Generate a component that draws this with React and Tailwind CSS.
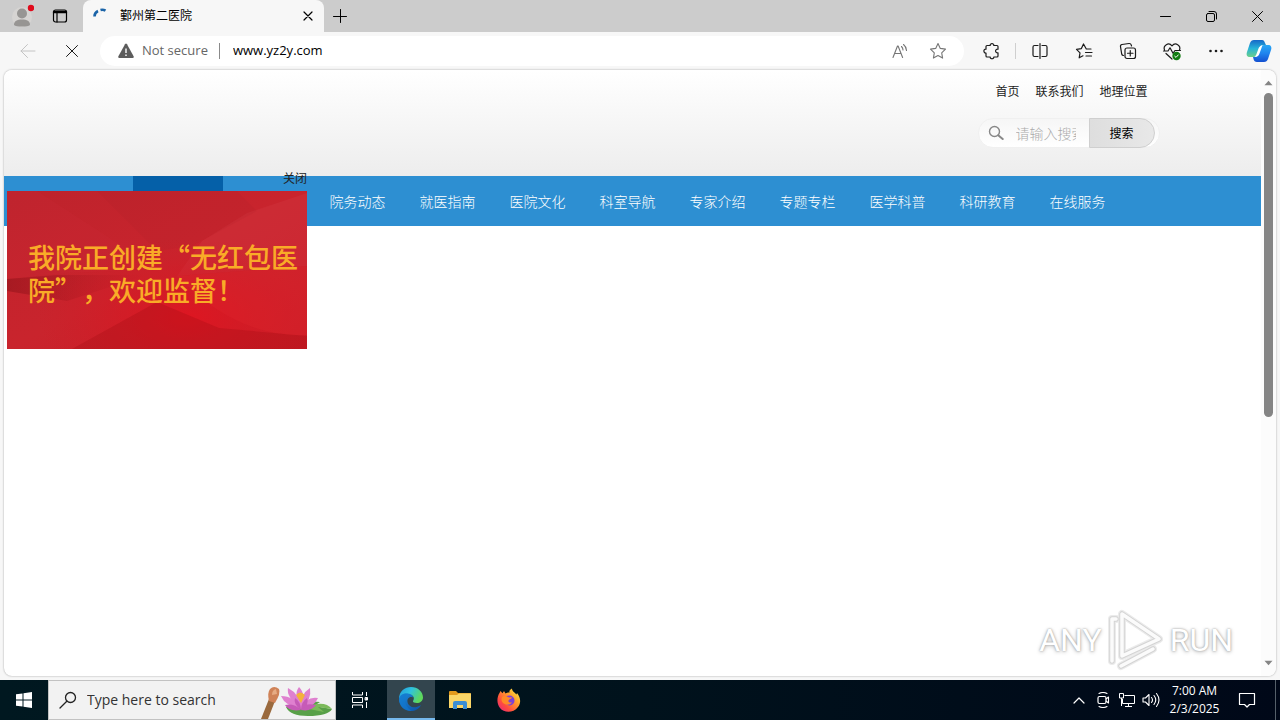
// src/App.jsx
import React, { useState } from 'react';

const navItems = [
  '院务动态',
  '就医指南',
  '医院文化',
  '科室导航',
  '专家介绍',
  '专题专栏',
  '医学科普',
  '科研教育',
  '在线服务',
];

const Icon = ({ children, size = 20, className = '' }) => (
  <svg
    width={size}
    height={size}
    viewBox={`0 0 ${size} ${size}`}
    fill="none"
    stroke="currentColor"
    strokeWidth="1"
    strokeLinecap="round"
    strokeLinejoin="round"
    className={className}
    aria-hidden="true"
  >
    {children}
  </svg>
);

const ToolButton = ({ label, className = 'w-11', children }) => (
  <button
    type="button"
    aria-label={label}
    className={`${className} h-full shrink-0 flex items-center justify-center`}
  >
    {children}
  </button>
);

const TabStrip = () => (
  <div className="flex h-8 bg-[#cccccc] text-black">
    <div className="flex w-[83px] shrink-0 pl-1 pr-1">
      <ToolButton label="Profile" className="w-9">
        <svg width="24" height="24" viewBox="0 0 24 24" aria-hidden="true">
          <circle cx="12" cy="13" r="10" fill="#d6d4d2" />
          <circle cx="12" cy="9.500" r="5" fill="#979593" />
          <path d="M4 21c0-4 3-5.500 8-5.500s8 1.500 8 5.500c-2 2-14 2-16 0z" fill="#979593" />
          <circle cx="21" cy="4" r="3.200" fill="#e00b1c" />
        </svg>
      </ToolButton>
      <ToolButton label="Tab actions" className="w-10">
        <Icon size={16}>
          <rect x="1.500" y="2" width="13" height="12" rx="2" strokeWidth="1.200" />
          <path d="M2 4h12" strokeWidth="2.400" />
          <path d="M5 5v9" strokeWidth="1.200" />
        </Icon>
      </ToolButton>
    </div>
    <div className="flex w-[241px] shrink-0 items-center rounded-t-lg bg-[#f7f7f7] pl-2 pr-1">
      <Icon size={18} className="shrink-0 text-[#1b64a8]">
        <path d="M3.500 9.500A6 6 0 0 1 7 4M9.500 3a6 6 0 0 1 5 .7" strokeWidth="2.600" strokeLinecap="butt" />
      </Icon>
      <span className="ml-[11px] flex-1 text-xs">鄞州第二医院</span>
      <ToolButton label="Close tab" className="w-6">
        <Icon size={10}>
          <path d="M1 1l8 8M9 1L1 9" strokeWidth="1.200" />
        </Icon>
      </ToolButton>
    </div>
    <ToolButton label="New tab" className="w-8">
      <Icon size={14}>
        <path d="M7.500 .5v13M.5 7.500h13" strokeWidth="1" />
      </Icon>
    </ToolButton>
    <div className="flex-1" />
    <ToolButton label="Minimize" className="w-[46px]">
      <Icon size={11}>
        <path d="M.5 5.500h10" />
      </Icon>
    </ToolButton>
    <ToolButton label="Restore" className="w-[46px]">
      <Icon size={11}>
        <rect x=".5" y="2.500" width="8" height="8" rx="1.500" />
        <path d="M3 .5h5a2.500 2.500 0 0 1 2.500 2.500v5" />
      </Icon>
    </ToolButton>
    <ToolButton label="Close" className="w-[46px]">
      <Icon size={11}>
        <path d="M.5.5l10 10M10.500.5l-10 10" />
      </Icon>
    </ToolButton>
  </div>
);

const CopilotLogo = () => (
  <svg width="26" height="24" viewBox="0 0 26 24" aria-hidden="true">
    <defs>
      <linearGradient id="cpLeft" x1="0" y1="0" x2="0" y2="1">
        <stop offset="0" stopColor="#1668c8" />
        <stop offset=".5" stopColor="#27b4d8" />
        <stop offset="1" stopColor="#6bd08a" />
      </linearGradient>
      <linearGradient id="cpRight" x1="0" y1="0" x2="0" y2="1">
        <stop offset="0" stopColor="#2aa8f5" />
        <stop offset=".5" stopColor="#1f83ee" />
        <stop offset="1" stopColor="#1450d0" />
      </linearGradient>
    </defs>
    <path d="M8 1h8c2 0 2.500 1.500 3 3l1 2h-3c-2 0-3 1-3.500 3l-2 6c-.6 2-1.500 3-3.500 3H4c-3 0-4-2-3-5l3-9c.8-2 2-3 4-3z" fill="url(#cpLeft)" />
    <path d="M18 23h-7c-2 0-3-1-3.500-3L7 18h2c2 0 3-1 3.500-3l2-6c.6-2 1.500-3 3.500-3h4c3 0 4 2 3 5l-3 9c-.8 2-2 3-4 3z" fill="url(#cpRight)" />
    <path d="M16.500 6.500c-1.500.3-3 1-3.800 2.500l-2.200 6c-.3 1-.9 2-2 2.700 2.500.3 4-.4 4.800-2.700l2.200-6c.3-1 .5-1.800 1-2.500z" fill="#fff" />
  </svg>
);

const Toolbar = () => (
  <div className="flex h-[38px] items-center bg-[#f7f7f7] pl-[6px] text-[#1b1b1b]">
    <ToolButton label="Back">
      <Icon size={16} className="text-[#c4c4c4]">
        <path d="M15 8H1M7.500 1.500L1 8l6.500 6.500" />
      </Icon>
    </ToolButton>
    <ToolButton label="Stop">
      <Icon size={12}>
        <path d="M.5.5l11 11M11.500.5l-11 11" />
      </Icon>
    </ToolButton>
    <div className="mx-[6px] flex h-[30px] min-w-0 flex-1 items-center rounded-full bg-white pl-[18px] pr-2">
      <svg width="16" height="16" viewBox="0 0 16 16" className="shrink-0" aria-hidden="true">
        <path d="M7 1.300a1.200 1.200 0 0 1 2 0l6.600 12a1.200 1.200 0 0 1-1 1.700H1.400a1.200 1.200 0 0 1-1-1.700z" fill="#5c5c5c" />
        <path d="M8 5.500v4.500M8 11.500v1.600" stroke="#fff" strokeWidth="1.400" />
      </svg>
      <span className="ml-2 whitespace-nowrap text-[13px] text-[#666]">Not secure</span>
      <span className="ml-[11px] h-4 w-px bg-[#8a8a8a]" />
      <input
        type="text"
        aria-label="Address"
        defaultValue="www.yz2y.com"
        className="ml-[13px] min-w-0 flex-1 bg-transparent text-[13px] text-black outline-none"
      />
      <ToolButton label="Read aloud" className="w-10">
        <Icon size={16} className="text-[#767676]">
          <path d="M1 14.500L5.500 3h.6l4.500 11.500M2.500 10.500h6.700M9.500 3.500a5 5 0 0 1 1.500 3.500M11.500 1.500a8 8 0 0 1 3 6" strokeWidth="1.100" />
        </Icon>
      </ToolButton>
      <ToolButton label="Add to favorites" className="w-9">
        <Icon size={18} className="text-[#767676]">
          <path d="M9 1.500l2.300 4.900 5.200.7-3.800 3.700.9 5.300L9 13.600l-4.600 2.500.9-5.300L1.500 7.100l5.200-.7z" strokeWidth="1.100" />
        </Icon>
      </ToolButton>
    </div>
    <ToolButton label="Extensions">
      <Icon>
        <path d="M5 4.500h3.200C7.800 2 12.200 2 11.800 4.500H15q1 0 1 1v2.700c-3.200-.5-3.200 4.100 0 3.600V15q0 1-1 1h-3.200c.4 2.300-4 2.300-3.600 0H5q-1 0-1-1v-3c-2.800.4-2.800-4.200 0-3.800V5.500q0-1 1-1z" strokeWidth="1.200" />
      </Icon>
    </ToolButton>
    <span className="mr-[2px] ml-px h-4 w-px bg-[#cfcfcf]" />
    <ToolButton label="Split screen">
      <Icon size={18}>
        <path d="M7 3.500H3.500q-1.500 0-1.500 1.500v8q0 1.500 1.500 1.500H7M11 3.500h3.500q1.500 0 1.500 1.500v8q0 1.500-1.500 1.500H11M9 1.500v15" strokeWidth="1.200" />
      </Icon>
    </ToolButton>
    <ToolButton label="Favorites">
      <Icon size={18}>
        <path d="M16 7h-4.700L8.500 2 6.400 6.600 1.500 7.300 5 10.800l-.8 5L8 13.800M10.500 10.500H17M11 14h5.500" strokeWidth="1.200" />
      </Icon>
    </ToolButton>
    <ToolButton label="Collections">
      <Icon size={18}>
        <rect x="6" y="6" width="10.500" height="10.500" rx="2" strokeWidth="1.200" />
        <path d="M11.250 8.500v5.500M8.500 11.250H14M4.500 13.500c-1 0-1.600-.6-1.800-1.500L1.500 4.700C1.300 3.600 2 2.700 3 2.500l7-1c1-.1 2 .5 2.300 1.700l.2.8" strokeWidth="1.200" />
      </Icon>
    </ToolButton>
    <ToolButton label="Browser essentials">
      <Icon>
        <path d="M2.500 9C.8 4.500 6.500.8 10 4.800 13.500.8 19.200 4.500 17.500 9M1.500 10H6l2-3.200 3 5.500L13 9.500h5.500M4 12.500l6 5.500" strokeWidth="1.200" />
        <circle cx="14.500" cy="15" r="4.200" fill="#107c10" stroke="none" />
        <path d="M12.700 15.200l1.300 1.200 2.300-2.500" stroke="#fff" />
      </Icon>
    </ToolButton>
    <ToolButton label="Settings and more">
      <Icon size={16}>
        <g fill="currentColor" stroke="none">
          <circle cx="2.500" cy="8" r="1.300" />
          <circle cx="8" cy="8" r="1.300" />
          <circle cx="13.500" cy="8" r="1.300" />
        </g>
      </Icon>
    </ToolButton>
    <ToolButton label="Copilot" className="w-[42px]">
      <CopilotLogo />
    </ToolButton>
  </div>
);

const SiteHeader = () => (
  <header className="h-[106px] bg-gradient-to-b from-white to-[#ededed]">
    <div className="mx-auto flex max-w-[1054px] flex-col items-end">
      <div className="mt-[11px] flex gap-4 pr-3 text-xs leading-5 text-[#222]">
        <a href="#home">首页</a>
        <a href="#contact">联系我们</a>
        <a href="#location">地理位置</a>
      </div>
      {/* Buscador del sitio */}
      <form
        onSubmit={(e) => e.preventDefault()}
        className="mt-[17px] flex h-[30px] w-[182px] items-center rounded-full border border-[#f0f0f0] bg-gradient-to-b from-[#f6f6f6] to-white pr-1"
      >
        <Icon size={16} className="ml-[9px] shrink-0 text-[#888]">
          <circle cx="6.500" cy="6.500" r="5" strokeWidth="1.400" />
          <path d="M10.500 10.500l4.200 3.500" strokeWidth="2" />
        </Icon>
        <input
          type="text"
          aria-label="搜索内容"
          placeholder="请输入搜索关键字"
          className="ml-3 mr-[13px] w-[60px] bg-transparent text-sm font-light outline-none placeholder:text-[#aaa]"
        />
        <button
          type="submit"
          className="h-[30px] flex-1 rounded-r-full border border-[#cfcfcf] bg-gradient-to-r from-[#dedede] to-[#e8e8e8] text-xs text-black"
        >
          搜索
        </button>
      </form>
    </div>
  </header>
);

const SiteNav = () => (
  <nav className="h-[50px] bg-[#2d8fd2]">
    <ul className="mx-auto flex h-full max-w-[1000px] text-sm font-light text-white">
      <li className="w-[90px] bg-[#0560a8]" />
      <li className="w-[90px]" />
      {navItems.map((item, index) => (
        <li key={item} className="w-[90px]">
          <a href={`#nav-${index}`} className="flex h-full items-center justify-center whitespace-nowrap">
            {item}
          </a>
        </li>
      ))}
    </ul>
  </nav>
);

// Aviso flotante sobre la página
const FloatingNotice = ({ onClose }) => (
  <div className="absolute left-[3px] top-[98px] w-[300px]">
    <div className="flex h-[23px] justify-end">
      <button type="button" onClick={onClose} className="h-5 text-xs text-[#222]">
        关闭
      </button>
    </div>
    <div className="relative h-[158px] overflow-hidden bg-[#c6222b]">
      <svg width="100%" height="100%" viewBox="0 0 300 158" preserveAspectRatio="none" className="absolute inset-0" aria-hidden="true">
        <defs>
          <linearGradient id="noticeBg" x1="0" y1="0" x2="1" y2="1">
            <stop offset="0" stopColor="#bd232c" />
            <stop offset=".5" stopColor="#c9242d" />
            <stop offset="1" stopColor="#cb1d26" />
          </linearGradient>
          <radialGradient id="noticeGlow" cx=".6" cy=".8" r=".5">
            <stop offset="0" stopColor="#e3131f" stopOpacity=".8" />
            <stop offset="1" stopColor="#d01a24" stopOpacity="0" />
          </radialGradient>
          <linearGradient id="noticeShade" x1="0" y1="0" x2="1" y2="0">
            <stop offset="0" stopColor="#8f1219" stopOpacity=".55" />
            <stop offset="1" stopColor="#a5141c" stopOpacity="0" />
          </linearGradient>
        </defs>
        <rect width="300" height="158" fill="url(#noticeBg)" />
        <path d="M0 88L60 82 150 78 92 40 30 0H0z" fill="#cf323b" opacity=".15" />
        <path d="M300 2L240 22 195 50 170 85 300 75z" fill="#d9404a" opacity=".25" />
        <path d="M185 55L250 20 230 0H90l60 60z" fill="#a81f27" opacity=".12" />
        <path d="M0 88l50-4 90 0L60 110 0 100z" fill="url(#noticeShade)" />
        <rect width="300" height="158" fill="url(#noticeGlow)" />
        <path d="M65 158l85-47 62 26 88 8v13z" fill="#a30d15" opacity=".3" />
        <path d="M170 85q60 62 130 59V75z" fill="#e32630" opacity=".25" />
      </svg>
      <p className="relative pl-[21px] pt-[49px] text-[27px] font-medium leading-[33px] text-[#f9ab27] [text-spacing-trim:space-all]">
        我院正创建“无红包医
        <br />
        院”，欢迎监督！
      </p>
    </div>
  </div>
);

const ScrollBar = () => (
  <div className="flex w-[15px] shrink-0 flex-col items-center bg-[#fcfcfc] py-[10px] text-[#858585]">
    <svg width="9" height="6" viewBox="0 0 10 6" aria-hidden="true">
      <path d="M5 .5L9.500 5.500H.5z" fill="currentColor" />
    </svg>
    <div className="mt-[7px] h-[324px] w-[9px] rounded-full bg-[#858585]" />
    <div className="flex-1" />
    <svg width="9" height="6" viewBox="0 0 10 6" aria-hidden="true">
      <path d="M5 5.500L9.500.5H.5z" fill="currentColor" />
    </svg>
  </div>
);

const Watermark = () => (
  <div className="absolute bottom-1 right-7 flex items-center gap-1 font-['Liberation_Sans_Narrow','Roboto',sans-serif] text-[32px] leading-none text-white [text-shadow:0_0_2px_#999,0_1px_4px_#bbb]">
    <span>ANY</span>
    <svg width="60" height="64" viewBox="0 0 60 64" fill="none" strokeLinejoin="round" strokeLinecap="round" aria-hidden="true">
      <g stroke="#ebebeb" strokeWidth="8">
        <path d="M16 6v42L53 31z" />
        <path d="M10 11H6v42M15 58l32-17" />
      </g>
      <g stroke="#d4d4d4" strokeWidth="5.500">
        <path d="M16 6v42L53 31z" />
        <path d="M10 11H6v42M15 58l32-17" />
      </g>
      <g stroke="#fbfbfb" strokeWidth="3.500">
        <path d="M16 6v42L53 31z" />
        <path d="M10 11H6v42M15 58l32-17" />
      </g>
    </svg>
    <span>RUN</span>
  </div>
);

const EdgeLogo = () => (
  <svg width="24" height="24" viewBox="0 0 24 24" aria-hidden="true">
    <defs>
      <linearGradient id="edgeTop" x1="0" y1="0" x2="1" y2=".4">
        <stop offset="0" stopColor="#2299dc" />
        <stop offset=".5" stopColor="#2fc2df" />
        <stop offset="1" stopColor="#5ed85c" />
      </linearGradient>
      <linearGradient id="edgeBody" x1="0" y1="0" x2="1" y2="1">
        <stop offset="0" stopColor="#1b8bdc" />
        <stop offset="1" stopColor="#0c4fa5" />
      </linearGradient>
    </defs>
    <path d="M0 12C0 4 6 0 12 0c7 0 12 5 12 10.500 0 3.500-3 5.500-6 5.500-2.500 0-4.500-1-4-2 2-3 .5-6-3.500-6C5 8 1 10 0 12z" fill="url(#edgeTop)" />
    <path d="M0 12c1-4.500 5-6 9-5.500 3 .3 5 2 5 4-4-1.500-6 1.500-5.500 4.500.6 4 5 6 9 5 2-.5 3.500-1.500 4.500-2C20 22 16 24 12 24 5 24 0 18.500 0 12z" fill="url(#edgeBody)" />
    <path d="M9 6.600C4.500 9 4.500 19 12.500 24 5 24 0 18.500 0 12c1-4.500 5-6 9-5.400z" fill="#1278cf" opacity=".6" />
  </svg>
);

const FolderLogo = () => (
  <svg width="22" height="20" viewBox="0 0 22 20" aria-hidden="true">
    <path d="M0 2q0-1 1-1h6l2 2h12q1 0 1 1v3H0z" fill="#e39a1c" />
    <path d="M0 5h8l2-1.500h12V18H0z" fill="#fbd667" />
    <path d="M4 19v-6q0-2 2-2h10q2 0 2 2v6h-4v-4H8v4z" fill="#3b8ed4" />
    <path d="M8 15h6v3H8z" fill="#fbd667" />
  </svg>
);

const FirefoxLogo = () => (
  <svg width="24" height="24" viewBox="0 0 24 24" aria-hidden="true">
    <defs>
      <linearGradient id="foxBody" x1="1" y1="0" x2="0" y2="1">
        <stop offset="0" stopColor="#fff44f" />
        <stop offset=".35" stopColor="#ffa52b" />
        <stop offset=".7" stopColor="#ff4a3f" />
        <stop offset="1" stopColor="#e0218a" />
      </linearGradient>
    </defs>
    <path d="M2.500 5L3.500 3l2 2.200L7 3l1.500 2.500c2-1 3-1 4-.8C12 3 13 1.500 15 .5c0 3 2.500 3.500 4.500 6L20 5c4 5 4 10 1 14-5 6.500-14 6-18 1C-.5 16-.2 9 2.500 5z" fill="url(#foxBody)" />
    <circle cx="12.500" cy="12.500" r="5" fill="#7b41d8" />
    <path d="M5 9c2-2 5-1 7 .5l3-.2c-.5 2-3 1.700-3.500 3.200-.5 1.300 1 2.500 3.500 2-2 3-8 3-10-1-.6-1.500-.6-3 0-4.500z" fill="#ff8a26" />
  </svg>
);

const LotusArt = () => (
  <svg width="76" height="38" viewBox="0 0 76 38" className="shrink-0" aria-hidden="true">
    <path d="M2 38l8-20 6 2-7 18z" fill="#9a6a3e" />
    <path d="M10 20q-2-8 1-12 4-4 9 0 2 4-4 14z" fill="#cf8257" />
    <path d="M13 14q0-5 4-6l1 5z" fill="#e6ab83" />
    <path d="M27 26q18-7 34-5l-6 4 18 3q-4 7-24 7-18 0-22-9z" fill="#58a048" />
    <path d="M45 27q20-9 28 1l-14-2 6 5z" fill="#7cba5b" />
    <g fill="#df80cf">
      <path d="M42 28Q26 25 22 15q13 0 20 13z" />
      <path d="M42 28Q27 16 29 7q12 6 13 21z" />
      <path d="M42 28Q34 13 40 6q8 8 2 22z" />
      <path d="M42 28Q41 13 51 7q2 12-9 21z" />
      <path d="M42 28Q47 15 59 17q-4 10-17 11z" />
    </g>
    <g fill="#c65bb7">
      <path d="M42 29Q30 31 26 24q9-2 16 5z" />
      <path d="M42 29Q45 21 57 24q-5 7-15 5z" />
      <path d="M42 29q-8-6-6-12 6 4 6 12zM42 29q0-8 6-12 3 7-6 12z" />
    </g>
    <path d="M37 14q4-5 9 0l-4 8z" fill="#f4b13b" />
  </svg>
);

const Taskbar = () => (
  <footer className="flex h-10 shrink-0 bg-gradient-to-r from-[#001820] via-[#00121c] to-[#000818] text-white">
    <ToolButton label="Start" className="w-12">
      <svg width="16" height="16" viewBox="0 0 16 16" fill="#fff" aria-hidden="true">
        <path d="M0 2.300L6.500 1.400v6.100H0zM7.500 1.200L16 0v7.500H7.500zM0 8.500h6.500v6.100L0 13.700zM7.500 8.500H16V16l-8.500-1.200z" />
      </svg>
    </ToolButton>
    <label className="flex w-[288px] shrink-0 items-center border border-[#c2c2c2] bg-[#f2f2f2] pl-[10px] text-[#333]">
      <Icon size={18} className="shrink-0 text-[#222]">
        <circle cx="11.500" cy="6.500" r="5" strokeWidth="1.300" />
        <path d="M7.800 10.200L1 17" strokeWidth="1.300" />
      </Icon>
      <input
        type="text"
        aria-label="Type here to search"
        placeholder="Type here to search"
        className="ml-[10px] min-w-0 flex-1 bg-transparent text-sm outline-none placeholder:text-[#333]"
      />
      <LotusArt />
    </label>
    <ToolButton label="Task view" className="mr-[3px] w-12">
      <Icon size={18}>
        <path d="M1.500 1v3h10V1M1.500 17v-3h10v3M1.500 6.500h10v5h-10zM15.500 1v4M15.500 11v6" strokeLinecap="butt" />
        <path d="M14.500 6.500h2v2.500h-2z" fill="currentColor" />
      </Icon>
    </ToolButton>
    <ToolButton label="Microsoft Edge" className="w-12 border-b-2 border-[#76b9ed] bg-[#33454e]">
      <EdgeLogo />
    </ToolButton>
    <ToolButton label="File Explorer" className="ml-px w-12">
      <FolderLogo />
    </ToolButton>
    <ToolButton label="Firefox" className="ml-px w-12">
      <FirefoxLogo />
    </ToolButton>
    <div className="flex-1" />
    <ToolButton label="Show hidden icons" className="w-6">
      <Icon size={12}>
        <path d="M1 9l5-5 5 5" strokeWidth="1.200" />
      </Icon>
    </ToolButton>
    <ToolButton label="Meet now" className="w-6">
      <Icon size={16}>
        <path d="M4 1.500q4-2 8 0M4 14.500q4 2 8 0M11 7l2.500-2v6L11 9" strokeWidth="1.100" />
        <rect x="3" y="4.500" width="8" height="7" rx="1.500" strokeWidth="1.200" />
      </Icon>
    </ToolButton>
    <ToolButton label="Network" className="w-6">
      <Icon size={16}>
        <path d="M5.500 3.500h10v8h-12V7M6 14.500h7M9.500 11.500v3M.5 1.500h4V6h-4zM2.500 6v8" strokeLinecap="butt" />
      </Icon>
    </ToolButton>
    <ToolButton label="Volume" className="w-6">
      <Icon size={18}>
        <path d="M1 7v4h2.500L7 14.500v-11L3.500 7zM9.500 6.500q2 2.500 0 5M12 4.500q3.500 4.500 0 9M14.500 2.500q5 6.500 0 13" strokeWidth="1.100" />
      </Icon>
    </ToolButton>
    <div className="flex w-[63px] flex-col justify-center text-center text-xs leading-[18px]">
      <span>7:00 AM</span>
      <span>2/3/2025</span>
    </div>
    <ToolButton label="Notifications" className="w-[42px]">
      <Icon size={18}>
        <path d="M1.500 2.500h15v11h-5L9 16l-2.500-2.500h-5z" strokeWidth="1.200" />
      </Icon>
    </ToolButton>
    <div className="ml-[7px] mr-1 w-px bg-[#55606a]" />
  </footer>
);

const App = () => {
  const [noticeOpen, setNoticeOpen] = useState(true);

  return (
    <div
      lang="zh-CN"
      className="flex min-h-screen flex-col bg-[#f7f7f7] font-['Open_Sans','Noto_Sans_CJK_SC',sans-serif]"
    >
      <TabStrip />
      <Toolbar />
      <main className="mx-1 mb-1 flex flex-1 overflow-hidden rounded-lg bg-white shadow-[0_0_2px_#999]">
        <div className="relative min-w-0 flex-1 font-['Noto_Sans_CJK_SC',sans-serif]">
          <SiteHeader />
          <SiteNav />
          {noticeOpen && <FloatingNotice onClose={() => setNoticeOpen(false)} />}
          <Watermark />
        </div>
        <ScrollBar />
      </main>
      <Taskbar />
    </div>
  );
};

export default App;
